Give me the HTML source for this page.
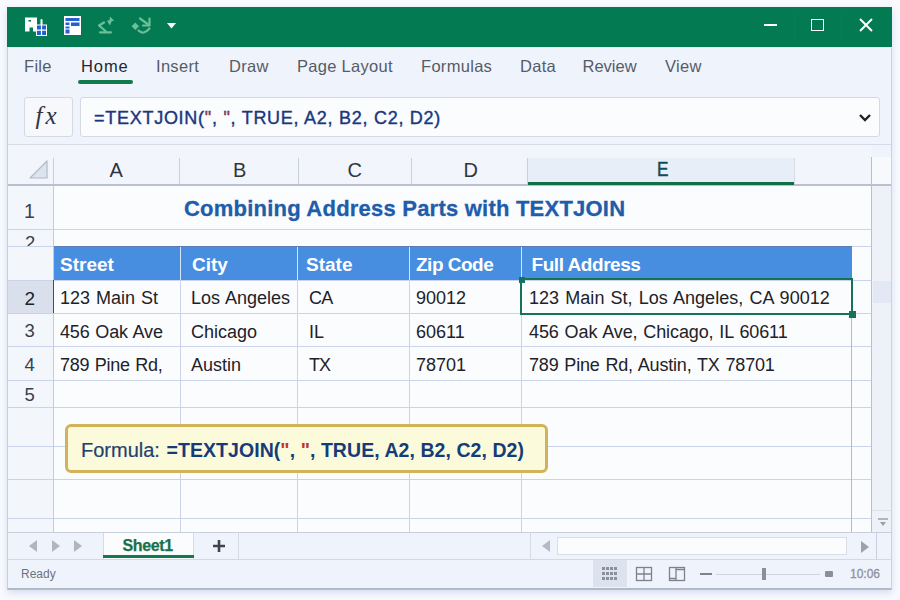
<!DOCTYPE html>
<html><head><meta charset="utf-8">
<style>
*{margin:0;padding:0;box-sizing:border-box}
html,body{width:900px;height:600px;overflow:hidden;background:#f8fafe;font-family:"Liberation Sans",sans-serif}
.a{position:absolute}
.t{position:absolute;white-space:pre;line-height:1}
#win{position:absolute;left:7px;top:7px;width:885px;height:583px;background:#eff3fc;border-left:1px solid #c9ceda;border-right:1px solid #d3d8e3;border-bottom:2px solid #b3bac7;box-shadow:0 3px 7px rgba(150,172,215,.35)}
#title{position:absolute;left:7px;top:7px;width:885px;height:40px;background:#037a52}
.tab{font-size:16.5px;color:#565c66;letter-spacing:.3px}
.cell{font-size:18px;color:#1e2228;letter-spacing:0;word-spacing:1px}
.hdr{font-size:19px;font-weight:700;color:#fff}
.colh{font-size:20px;color:#2f3540}
.rowh{font-size:18.5px;color:#3a404b}
.hl{position:absolute;height:1px;background:#cad3ea}
.vl{position:absolute;width:1px;background:#cad3ea}
</style></head><body>
<div id="win"></div>
<div id="title"></div>
<!-- light line under title -->
<div class="a" style="left:8px;top:47px;width:884px;height:1px;background:#d6f3e6"></div>

<!-- menu tabs -->
<div class="t tab" style="left:24px;top:57.7px">File</div>
<div class="t tab" style="left:81px;top:57.7px;color:#23272e;letter-spacing:.9px">Home</div>
<div class="a" style="left:78px;top:80px;width:55px;height:4px;border-radius:2px;background:#127a4c"></div>
<div class="t tab" style="left:156px;top:57.7px">Insert</div>
<div class="t tab" style="left:229px;top:57.7px">Draw</div>
<div class="t tab" style="left:297px;top:57.7px">Page Layout</div>
<div class="t tab" style="left:421px;top:57.7px">Formulas</div>
<div class="t tab" style="left:520px;top:57.7px">Data</div>
<div class="t tab" style="left:582.5px;top:57.7px;letter-spacing:0">Review</div>
<div class="t tab" style="left:665px;top:57.7px">View</div>

<!-- formula bar -->
<div class="a" style="left:24px;top:97px;width:49px;height:40px;background:#f7f8fc;border:1px solid #d4d9e4;border-radius:3px"></div>
<div class="t" style="left:35.5px;top:102.5px;font-family:'Liberation Serif',serif;font-style:italic;font-size:25px;color:#2f3541;letter-spacing:3px">fx</div>
<div class="a" style="left:80px;top:97px;width:800px;height:40px;background:#fbfcfe;border:1px solid #d4d9e4;border-radius:3px"></div>
<div class="t" style="left:94px;top:109px;font-size:18px;color:#1a3780;letter-spacing:.73px;-webkit-text-stroke:.4px #1a3780">=TEXTJOIN(<span style="color:#c8322c">"</span>, <span style="color:#c8322c">"</span>, TRUE, A2, B2, C2, D2)</div>
<svg class="a" style="left:858px;top:112.5px" width="14" height="10" viewBox="0 0 14 10"><path d="M2 2 L7 7 L12 2" stroke="#1f2329" stroke-width="2.4" fill="none"/></svg>
<div class="a" style="left:8px;top:144px;width:884px;height:1px;background:#d6dbe6"></div>


<!-- column header area -->
<div class="a" style="left:8px;top:145px;width:864px;height:39px;background:#f2f5fb"></div>
<div class="a" style="left:872px;top:157px;width:20px;height:27px;background:#f8f9fc"></div>
<svg class="a" style="left:27px;top:159px" width="22" height="22" viewBox="0 0 22 22"><path d="M20 2 L20 19 L3 19 Z" fill="#dce3ef" stroke="#b3bac8" stroke-width="1.2" stroke-linejoin="round"/></svg>
<div class="a" style="left:528px;top:158px;width:266px;height:26px;background:#e8eef8"></div>
<div class="vl" style="left:53px;top:158px;height:26px;background:#c9cfdc"></div>
<div class="vl" style="left:179px;top:158px;height:26px;background:#c9cfdc"></div>
<div class="vl" style="left:298px;top:158px;height:26px;background:#c9cfdc"></div>
<div class="vl" style="left:411px;top:158px;height:26px;background:#c9cfdc"></div>
<div class="vl" style="left:527px;top:158px;height:26px;background:#c9cfdc"></div>
<div class="vl" style="left:794px;top:158px;height:26px;background:#d5dae5"></div>
<div class="t colh" style="left:109.5px;top:159.6px">A</div>
<div class="t colh" style="left:233px;top:160px">B</div>
<div class="t colh" style="left:347.5px;top:159.8px">C</div>
<div class="t colh" style="left:463.5px;top:160px">D</div>
<div class="t colh" style="left:656.5px;top:158.8px;font-size:20.5px;color:#0f4c58;-webkit-text-stroke:.5px #0f4c58;transform:scaleX(.84);transform-origin:0 0">E</div>
<div class="hl" style="left:8px;top:184px;width:884px;height:1.5px;background:#b9c1d1;z-index:3"></div>
<div class="a" style="left:528px;top:181.5px;width:266px;height:3.5px;background:#117048;z-index:5"></div>

<!-- grid body -->
<div class="a" style="left:54px;top:184px;width:818px;height:348px;background:#fbfcfe"></div>
<div class="a" style="left:8px;top:184px;width:46px;height:348px;background:#f3f6fb"></div>
<div class="a" style="left:872px;top:184px;width:20px;height:348px;background:#eef1f8"></div>
<div class="a" style="left:873px;top:281px;width:18px;height:22px;background:#e2e8f4"></div>
<div class="a" style="left:8px;top:280px;width:46px;height:33px;background:#d9e0ec"></div>
<div class="hl" style="left:8px;top:229px;width:864px"></div>
<div class="hl" style="left:8px;top:246px;width:864px"></div>
<div class="hl" style="left:8px;top:280px;width:864px"></div>
<div class="hl" style="left:8px;top:313px;width:864px"></div>
<div class="hl" style="left:8px;top:346px;width:864px"></div>
<div class="hl" style="left:8px;top:380px;width:864px"></div>
<div class="hl" style="left:8px;top:407px;width:864px"></div>
<div class="hl" style="left:8px;top:446px;width:864px"></div>
<div class="hl" style="left:8px;top:479px;width:864px"></div>
<div class="hl" style="left:8px;top:518px;width:864px"></div>
<div class="vl" style="left:180px;top:280px;height:252px"></div>
<div class="vl" style="left:297px;top:280px;height:252px"></div>
<div class="vl" style="left:409px;top:280px;height:252px"></div>
<div class="vl" style="left:521px;top:280px;height:252px"></div>
<div class="vl" style="left:851px;top:313px;height:219px;background:#b3bac8"></div>
<div class="vl" style="left:53px;top:184px;height:348px;background:#c5ccd9"></div>
<div class="vl" style="left:871px;top:157px;height:375px;background:#b9c0cd"></div>
<div class="vl" style="left:891px;top:48px;height:540px;background:#cdd2dc;z-index:4"></div>
<div class="hl" style="left:872px;top:510px;width:19px;background:#dde2ea"></div>

<!-- row headers -->
<div class="t rowh" style="left:24px;top:202.3px;font-size:19.5px">1</div>
<div class="a" style="left:8px;top:230px;width:45px;height:16px;overflow:hidden"><div class="t rowh" style="left:17px;top:4.3px">2</div></div>
<div class="t rowh" style="left:24.5px;top:288.5px;color:#222;font-size:19px">2</div>
<div class="t rowh" style="left:24.5px;top:322.3px">3</div>
<div class="t rowh" style="left:24.5px;top:355.7px">4</div>
<div class="t rowh" style="left:24.5px;top:386.3px">5</div>
<div class="a" style="left:52.5px;top:280px;width:1.7px;height:33px;background:#454b57"></div>

<!-- title -->
<div class="t" style="left:184px;top:198px;font-size:22px;font-weight:700;color:#1f5dab;letter-spacing:.22px;-webkit-text-stroke:.3px #1f5dab">Combining Address Parts with TEXTJOIN</div>

<!-- blue header -->
<div class="a" style="left:54px;top:246px;width:798px;height:34px;background:#478de0;border-top:1px solid #5b7fb3"></div>
<div class="a" style="left:180px;top:247px;width:1px;height:33px;background:#d3e6fd"></div>
<div class="a" style="left:297px;top:247px;width:1px;height:33px;background:#d3e6fd"></div>
<div class="a" style="left:409px;top:247px;width:1px;height:33px;background:#d3e6fd"></div>
<div class="a" style="left:521px;top:247px;width:1px;height:33px;background:#d3e6fd"></div>
<div class="t hdr" style="left:60px;top:254.8px">Street</div>
<div class="t hdr" style="left:192px;top:254.8px">City</div>
<div class="t hdr" style="left:306px;top:254.8px">State</div>
<div class="t hdr" style="left:416px;top:254.8px;letter-spacing:-.5px">Zip Code</div>
<div class="t hdr" style="left:531.5px;top:254.8px;letter-spacing:-.45px">Full Address</div>

<!-- data -->
<div class="t cell" style="left:60px;top:288.8px">123 Main St</div>
<div class="t cell" style="left:191px;top:288.8px">Los Angeles</div>
<div class="t cell" style="left:309px;top:288.8px;letter-spacing:-.8px">CA</div>
<div class="t cell" style="left:416px;top:288.8px">90012</div>
<div class="t cell" style="left:529px;top:288.8px;letter-spacing:.05px">123 Main St, Los Angeles, CA 90012</div>
<div class="t cell" style="left:60px;top:322.6px;letter-spacing:-.18px">456 Oak Ave</div>
<div class="t cell" style="left:191px;top:322.6px">Chicago</div>
<div class="t cell" style="left:309px;top:322.6px">IL</div>
<div class="t cell" style="left:416px;top:322.6px">60611</div>
<div class="t cell" style="left:529px;top:322.6px;letter-spacing:-.11px">456 Oak Ave, Chicago, IL 60611</div>
<div class="t cell" style="left:60px;top:355.8px;letter-spacing:-.3px">789 Pine Rd,</div>
<div class="t cell" style="left:191px;top:355.8px">Austin</div>
<div class="t cell" style="left:309px;top:355.8px;letter-spacing:-1px">TX</div>
<div class="t cell" style="left:416px;top:355.8px">78701</div>
<div class="t cell" style="left:529px;top:355.8px;letter-spacing:-.18px">789 Pine Rd, Austin, TX 78701</div>

<!-- selection -->
<div class="a" style="left:520px;top:278px;width:333px;height:37px;border:2px solid #15735a"></div>
<div class="a" style="left:518.5px;top:277px;width:6.5px;height:6px;background:#15735a"></div>
<div class="a" style="left:848.5px;top:310.5px;width:7px;height:7px;background:#15735a"></div>

<!-- formula callout -->
<div class="a" style="left:65px;top:424px;width:483px;height:49px;background:#fbfbdc;border:3px solid #d3b35a;border-radius:6px"></div>
<div class="t" style="left:81px;top:440px;font-size:20px;color:#1f4270;-webkit-text-stroke:.2px #1f4270">Formula:</div>
<div class="t" style="left:166.5px;top:440.5px;font-size:19.5px;font-weight:700;color:#173b78;letter-spacing:.06px">=TEXTJOIN(<span style="color:#c8322c">"</span>, <span style="color:#c8322c">"</span>, TRUE, A2, B2, C2, D2)</div>


<!-- tab bar -->
<div class="a" style="left:8px;top:532px;width:884px;height:27px;background:#eff3fc;border-top:1px solid #c9cfdc"></div>
<svg class="a" style="left:26px;top:539px" width="60" height="14" viewBox="0 0 60 14"><path d="M11 1 L3 7 L11 13 Z" fill="#b0b6c1"/><path d="M26 1 L34 7 L26 13 Z" fill="#b0b6c1"/><path d="M48 1 L56 7 L48 13 Z" fill="#b0b6c1"/></svg>
<div class="a" style="left:103px;top:533px;width:91px;height:26px;background:#fbfcfe;border-left:1px solid #d5dae5;border-right:1px solid #d5dae5"></div>
<div class="a" style="left:103px;top:555px;width:91px;height:3px;background:#147a4e"></div>
<div class="t" style="left:122.5px;top:537.5px;font-size:16px;font-weight:700;color:#18704a;letter-spacing:-.35px;-webkit-text-stroke:.25px #18704a">Sheet1</div>
<div class="a" style="left:238px;top:533px;width:1px;height:26px;background:#d5dae5"></div>
<svg class="a" style="left:212px;top:539px" width="14" height="14" viewBox="0 0 14 14"><path d="M7 1 V13 M1 7 H13" stroke="#3e444e" stroke-width="2.6"/></svg>
<!-- h scrollbar -->
<div class="a" style="left:530px;top:533px;width:1px;height:26px;background:#d5dae5"></div>
<svg class="a" style="left:540px;top:539px" width="12" height="14" viewBox="0 0 12 14"><path d="M10 1 L2 7 L10 13 Z" fill="#b4bac4"/></svg>
<div class="a" style="left:557px;top:537px;width:290px;height:18px;background:#fbfcfe;border:1px solid #d8dde7"></div>
<svg class="a" style="left:858px;top:540px" width="12" height="14" viewBox="0 0 12 14"><path d="M3 1 L11 7 L3 13 Z" fill="#9ca2ad"/></svg>
<div class="a" style="left:876px;top:533px;width:1px;height:27px;background:#c9cfdc"></div>
<svg class="a" style="left:876px;top:516px" width="14" height="12" viewBox="0 0 14 12"><path d="M2 3 H12" stroke="#9aa0aa" stroke-width="1.5"/><path d="M4 6 L10 6 L7 10 Z" fill="#9aa0aa"/></svg>

<!-- status bar -->
<div class="a" style="left:8px;top:559px;width:884px;height:1px;background:#d3d8e2"></div>
<div class="t" style="left:21px;top:568px;font-size:12px;color:#6d737d">Ready</div>
<div class="a" style="left:593px;top:560px;width:34px;height:27px;background:#dde3ee"></div>
<svg class="a" style="left:600px;top:565px" width="20" height="18" viewBox="0 0 20 18"><g fill="#8b919b">
<rect x="2" y="2" width="3" height="3"/><rect x="6" y="2" width="3" height="3"/><rect x="10" y="2" width="3" height="3"/><rect x="14" y="2" width="3" height="3"/>
<rect x="2" y="7" width="3" height="3"/><rect x="6" y="7" width="3" height="3"/><rect x="10" y="7" width="3" height="3"/><rect x="14" y="7" width="3" height="3"/>
<rect x="2" y="12" width="3" height="3"/><rect x="6" y="12" width="3" height="3"/><rect x="10" y="12" width="3" height="3"/><rect x="14" y="12" width="3" height="3"/></g></svg>
<svg class="a" style="left:634px;top:565px" width="20" height="18" viewBox="0 0 20 18"><rect x="2.5" y="2.5" width="15" height="13" fill="none" stroke="#7d838d" stroke-width="1.3"/><path d="M10 2.5 V15.5 M2.5 9 H17.5" stroke="#7d838d" stroke-width="1.3"/></svg>
<svg class="a" style="left:667px;top:565px" width="20" height="18" viewBox="0 0 20 18"><rect x="2.5" y="2.5" width="15" height="13" fill="none" stroke="#7d838d" stroke-width="1.3"/><path d="M9 2.5 V15.5 M9 4.5 H17.5 M2.5 13.5 H9" stroke="#7d838d" stroke-width="1.3"/></svg>
<div class="a" style="left:700px;top:573px;width:12px;height:2px;background:#7d838d"></div>
<div class="a" style="left:716px;top:574px;width:104px;height:1px;background:#cfd4dd"></div>
<div class="a" style="left:762px;top:568px;width:4px;height:12px;background:#8a9099"></div>
<div class="a" style="left:825px;top:571px;width:8px;height:6px;border-radius:1px;background:#8a9099"></div>
<div class="t" style="left:850px;top:567.5px;font-size:12px;color:#8d929b;-webkit-text-stroke:.3px #8d929b">10:06</div>

<!-- title bar icons -->
<svg class="a" style="left:20px;top:12px" width="32" height="28" viewBox="0 0 32 28">
<path d="M5 5.5 H17 V19.5 H13 V15.5 H9.5 V19.5 H5 Z" fill="#fff"/>
<rect x="8.5" y="8" width="2.5" height="1.6" fill="#037a52"/>
<rect x="20.5" y="7" width="2" height="6.5" rx="1" fill="#fff"/>
<rect x="16.5" y="13" width="10" height="10.5" fill="#1d5fd0" stroke="#fff" stroke-width="1"/>
<path d="M21.5 13 V23.5 M16.5 18.2 H26.5" stroke="#fff" stroke-width="1.2"/>
</svg>
<svg class="a" style="left:62px;top:14px" width="22" height="22" viewBox="0 0 22 22">
<rect x="2" y="2" width="17" height="19" fill="#fff"/>
<rect x="3.5" y="4" width="14" height="3" fill="#1f62d0"/>
<rect x="3.5" y="8.5" width="4" height="2.5" fill="#1f62d0"/>
<rect x="9" y="8.5" width="8.5" height="3.5" fill="#1f62d0"/>
<rect x="3.5" y="12.5" width="4" height="2" fill="#1f62d0"/>
<rect x="3.5" y="15.5" width="4" height="4" fill="#1f62d0"/>
</svg>
<svg class="a" style="left:0;top:0" width="200" height="48" viewBox="0 0 200 48">
<g fill="none" stroke="#6dbf97" stroke-width="2.2" stroke-linejoin="round" stroke-linecap="round">
<path d="M100 32.3 H111"/>
<path d="M104 22.5 L99 25.5 L105.5 31"/>
<path d="M138.5 30.5 Q143.5 35.5 149.5 28.5"/>
<path d="M140 18.5 L149 25"/>
<path d="M149.5 18.5 V25.5 H143"/>
</g>
<g fill="#6dbf97">
<path d="M110 16.5 L114 20.5 L111.5 21.5 L110 25.5 L107 21 L109.5 20 Z"/>
<path d="M135.3 22.5 L139 26.3 L135.3 30 L131.6 26.3 Z"/>
</g>
</svg>
<svg class="a" style="left:166px;top:22px" width="11" height="8" viewBox="0 0 11 8"><path d="M1 1 H10 L5.5 6.5 Z" fill="#fff"/></svg>
<!-- window controls -->
<div class="a" style="left:764px;top:24px;width:12.5px;height:2px;background:#fff"></div>
<div class="a" style="left:811px;top:19px;width:13px;height:12px;border:1.7px solid #fff"></div>
<div class="a" style="left:794px;top:14px;width:1px;height:26px;background:rgba(255,255,255,.03)"></div><div class="a" style="left:841px;top:14px;width:1px;height:26px;background:rgba(255,255,255,.03)"></div>
<svg class="a" style="left:858px;top:17px" width="16" height="16" viewBox="0 0 16 16"><path d="M2 2 L14 14 M14 2 L2 14" stroke="#fff" stroke-width="2"/></svg>

</body></html>
